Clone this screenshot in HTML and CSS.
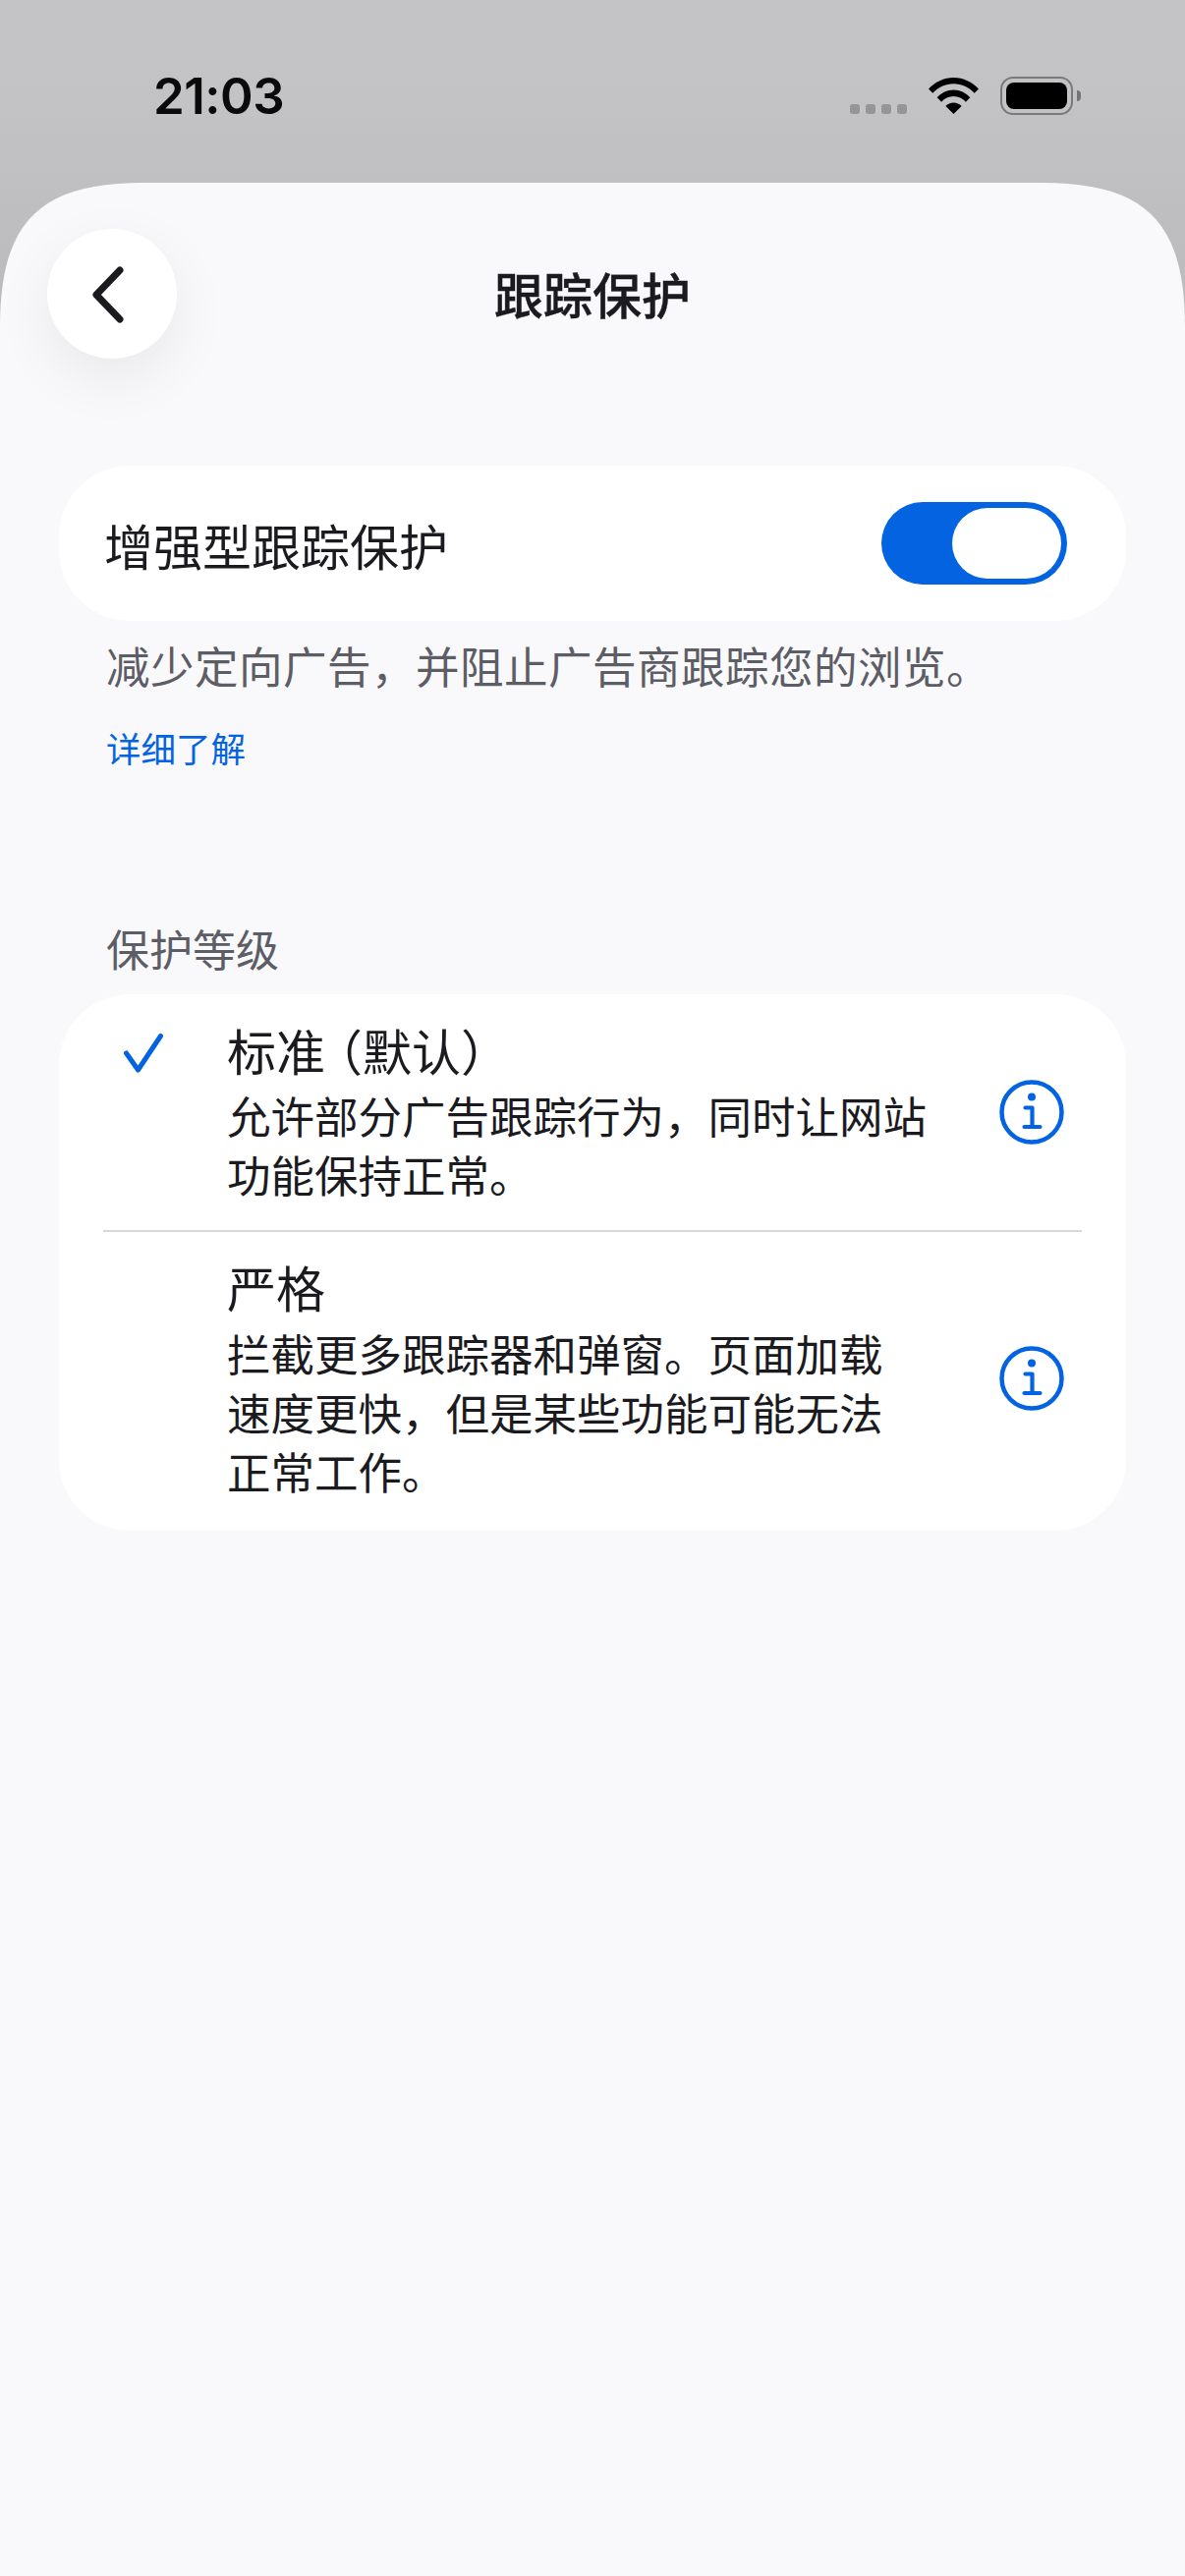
FILE: index.html
```html
<!DOCTYPE html>
<html lang="zh-CN">
<head>
<meta charset="utf-8">
<title>跟踪保护</title>
<link rel="stylesheet" href="styles.css">
</head>
<body>
<div class="screen">
  <header class="status">
    <span class="time">21:03</span>
    <span class="status-right">
      <span class="dots"><i></i><i></i><i></i><i></i></span>
      <svg class="wifi" width="51" height="37" viewBox="0 0 51 37"><path d="M0 11.500C6.500 4.500 15.500 0 25.500 0S44.500 4.500 51 11.500L46.700 15.800C41.300 10 33.800 6.300 25.500 6.300S9.700 10 4.300 15.800Z"/><path d="M8.700 20.300C13 15.600 19 12.600 25.500 12.600S38 15.600 42.300 20.300L37.900 24.700C34.700 21.200 30.300 19 25.500 19S16.300 21.200 13.100 24.700Z"/><path d="M17.400 28.900C19.500 26.800 22.300 25.400 25.500 25.400S31.500 26.800 33.600 28.900L25.500 37Z"/></svg>
      <span class="battery"><span class="battery-fill"></span></span>
      <span class="battery-nub"></span>
    </span>
  </header>
  <main class="sheet">
    <nav class="nav">
      <button class="back" aria-label="返回">
        <svg width="34" height="58" viewBox="0 0 34 58"><path d="M29 4L5 29L29 54" fill="none" stroke="#1b1b1f" stroke-width="7" stroke-linecap="round" stroke-linejoin="round"/></svg>
      </button>
      <h1 class="title">跟踪保护</h1>
    </nav>
    <section class="card toggle-card">
      <span class="toggle-label">增强型跟踪保护</span>
      <span class="toggle"><span class="knob"></span></span>
    </section>
    <p class="caption">减少定向广告，并阻止广告商跟踪您的浏览。</p>
    <a class="link">详细了解</a>
    <h2 class="section-label">保护等级</h2>
    <section class="card levels">
      <div class="row row-first">
        <span class="check-col">
          <svg width="40" height="40" viewBox="0 0 40 40"><path d="M2.500 20L14.500 37L37.500 2.500" fill="none" stroke="#0463e1" stroke-width="5" stroke-linecap="round" stroke-linejoin="round"/></svg>
        </span>
        <div class="row-text">
          <div class="row-title">标准<span class="paren-open">（</span>默认）</div>
          <div class="row-desc">允许部分广告跟踪行为，同时让网站<br>功能保持正常。</div>
        </div>
        <svg class="info" width="66" height="66" viewBox="0 0 66 66"><circle cx="33" cy="33" r="30.500" fill="none" stroke="#0463e1" stroke-width="4.500"/><circle cx="33" cy="17.500" r="4" fill="#0463e1"/><path d="M26.500 28.500H33.500V48M25.500 48H41.500" fill="none" stroke="#0463e1" stroke-width="4.200" stroke-linecap="round" stroke-linejoin="round"/></svg>
      </div>
      <div class="divider"></div>
      <div class="row row-second">
        <span class="check-col"></span>
        <div class="row-text">
          <div class="row-title">严格</div>
          <div class="row-desc">拦截更多跟踪器和弹窗。页面加载<br>速度更快，但是某些功能可能无法<br>正常工作。</div>
        </div>
        <svg class="info" width="66" height="66" viewBox="0 0 66 66"><circle cx="33" cy="33" r="30.500" fill="none" stroke="#0463e1" stroke-width="4.500"/><circle cx="33" cy="17.500" r="4" fill="#0463e1"/><path d="M26.500 28.500H33.500V48M25.500 48H41.500" fill="none" stroke="#0463e1" stroke-width="4.200" stroke-linecap="round" stroke-linejoin="round"/></svg>
      </div>
    </section>
  </main>
</div>
</body>
</html>
```
FILE: styles.css
```css
* { box-sizing: border-box; }
html, body { margin: 0; padding: 0; }
body {
  width: 1206px;
  height: 2622px;
  overflow: hidden;
  font-family: "Noto Sans CJK SC", "Noto Sans", sans-serif;
  color: #1b1b1f;
}
.screen {
  width: 1206px;
  height: 2622px;
  display: flex;
  flex-direction: column;
  background: linear-gradient(180deg, #c4c4c6 0, #c3c3c5 100px, #bbbbbd 300px);
}
.status {
  height: 186px;
  flex: none;
  display: flex;
  justify-content: space-between;
  align-items: flex-start;
  padding: 68px 106px 0 156px;
}
.time {
  font-family: Inter, sans-serif;
  font-weight: 600;
  font-size: 51px;
  line-height: 60px;
  color: #0a0a0a;
  letter-spacing: -0.5px;
}
.status-right {
  display: flex;
  align-items: flex-start;
  padding-top: 10px;
}
.dots {
  display: flex;
  gap: 6px;
  margin: 28px 22px 0 0;
}
.dots i {
  display: block;
  width: 10px;
  height: 10px;
  border-radius: 3px;
  background: #959597;
}
.wifi { display: block; margin-top: 1px; }
.battery {
  display: block;
  width: 74px;
  height: 39px;
  margin-left: 22px;
  padding: 4px;
  border: 2px solid #7a7a7c;
  border-radius: 13px;
}
.battery-fill {
  display: block;
  width: 100%;
  height: 100%;
  background: #000;
  border-radius: 8px;
}
.battery-nub {
  display: block;
  width: 4px;
  height: 11px;
  margin: 14px 0 0 4px;
  background: #747476;
  border-radius: 0 4px 4px 0;
}
.sheet {
  flex: 1;
  background: #f9f9fb;
  clip-path: path("M0 147C0 40 40 0 146 0H1060C1166 0 1206 40 1206 147V2436H0Z");
  padding-top: 47px;
}
.nav {
  display: grid;
  grid-template-columns: 1fr auto 1fr;
  align-items: center;
  height: 132px;
  padding-left: 48px;
  padding-right: 48px;
}
.back {
  width: 132px;
  height: 132px;
  padding: 0;
  border: 0;
  border-radius: 50%;
  background: #fff;
  box-shadow: 0 20px 60px rgba(0, 0, 0, 0.07);
  display: flex;
  align-items: center;
  justify-content: center;
}
.back svg { margin: 2px 8px 0 0; }
.title {
  margin: 0 0 2px;
  font-size: 50px;
  font-weight: 500;
  line-height: 60px;
  color: #1b1b1f;
  -webkit-text-stroke: 0.4px #1b1b1f;
}
.card {
  background: #fff;
  margin: 0 60px;
  border-radius: 72px;
}
.toggle-card {
  margin-top: 109px;
  height: 158px;
  display: flex;
  align-items: center;
  justify-content: space-between;
  padding: 0 60px 0 47px;
}
.toggle-label {
  font-size: 50px;
  line-height: 60px;
  margin: 2px 0 0 -1px;
}
.toggle {
  width: 189px;
  height: 84px;
  padding: 6px;
  border-radius: 42px;
  background: #0463e1;
  display: flex;
  justify-content: flex-end;
}
.knob {
  width: 111px;
  height: 72px;
  border-radius: 36px;
  background: #fff;
}
.caption {
  margin: 15px 60px 0 108px;
  font-size: 44.500px;
  letter-spacing: 0.5px;
  line-height: 60px;
  color: #5d5d66;
  white-space: nowrap;
}
.link {
  display: block;
  margin: 29px 0 0 108px;
  font-size: 35.500px;
  line-height: 50px;
  color: #0463e1;
}
.section-label {
  margin: 149px 0 0 108px;
  font-size: 44px;
  font-weight: 400;
  line-height: 60px;
  color: #5d5d66;
}
.levels {
  margin-top: 17px;
  padding: 26px 0 31px;
}
.row {
  display: flex;
  align-items: center;
  padding-right: 63px;
}
.row-first { padding-bottom: 27px; }
.check-col {
  align-self: flex-start;
  flex: none;
  width: 171px;
  padding: 14px 0 0 66px;
}
.check-col svg { display: block; }
.row-text { flex: 1; white-space: nowrap; }
.row-title {
  font-size: 50px;
  line-height: 60px;
}
.paren-open {
  font-feature-settings: "halt";
  padding-left: 13px;
}
.row-desc {
  margin-top: 7px;
  font-size: 44.500px;
  line-height: 60px;
}
.row-second .row-desc { margin-top: 8px; }
.info { flex: none; display: block; }
.divider {
  height: 2px;
  margin: 0 45px 25px;
  background: #d8d8da;
}
```
